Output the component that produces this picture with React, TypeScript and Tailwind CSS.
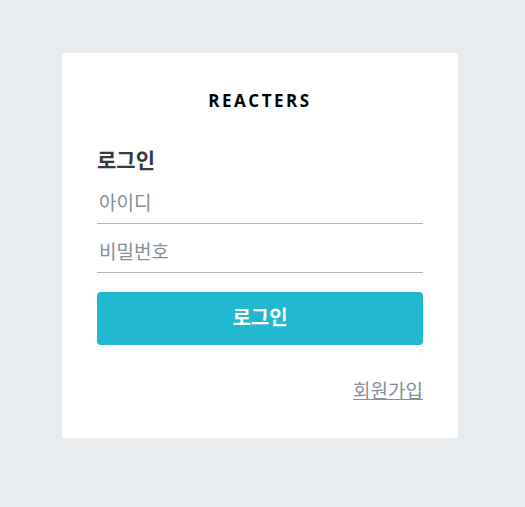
export default function App() {
  return (
    <div
      className="min-h-[507px] bg-[#e9ecef] pt-[53px] pl-[62px]"
      style={{ fontFamily: '"Open Sans", "Noto Sans CJK KR", sans-serif' }}
    >
      <div className="w-[396px] rounded-[2px] bg-white px-[35px] pt-[35px] pb-[32px]">
        <div className="text-center text-[17px] font-bold tracking-[2.5px] text-black">REACTERS</div>
        <h3 className="mt-[32px] text-[21px] font-bold leading-[28px] text-[#343a40]">로그인</h3>
        <form className="flex flex-col">
          <input
            placeholder="아이디"
            className="mt-[15px] border-b border-[#adb5bd] pb-[6px] pl-[2px] text-[19px] leading-[28px] text-[#343a40] outline-none placeholder:text-[#868e96]"
          />
          <input
            type="password"
            placeholder="비밀번호"
            className="mt-[14px] border-b border-[#adb5bd] pb-[6px] pl-[2px] text-[19px] leading-[28px] text-[#343a40] outline-none placeholder:text-[#868e96]"
          />
          <button
            type="button"
            className="mt-[19px] h-[53px] rounded-[4px] bg-[#22b8cf] text-[20px] font-bold text-white"
          >
            로그인
          </button>
        </form>
        <div className="mt-[33px] text-right leading-[27px]">
          <a href="#" className="text-[19px] text-[#868e96] underline">
            회원가입
          </a>
        </div>
      </div>
    </div>
  );
}
